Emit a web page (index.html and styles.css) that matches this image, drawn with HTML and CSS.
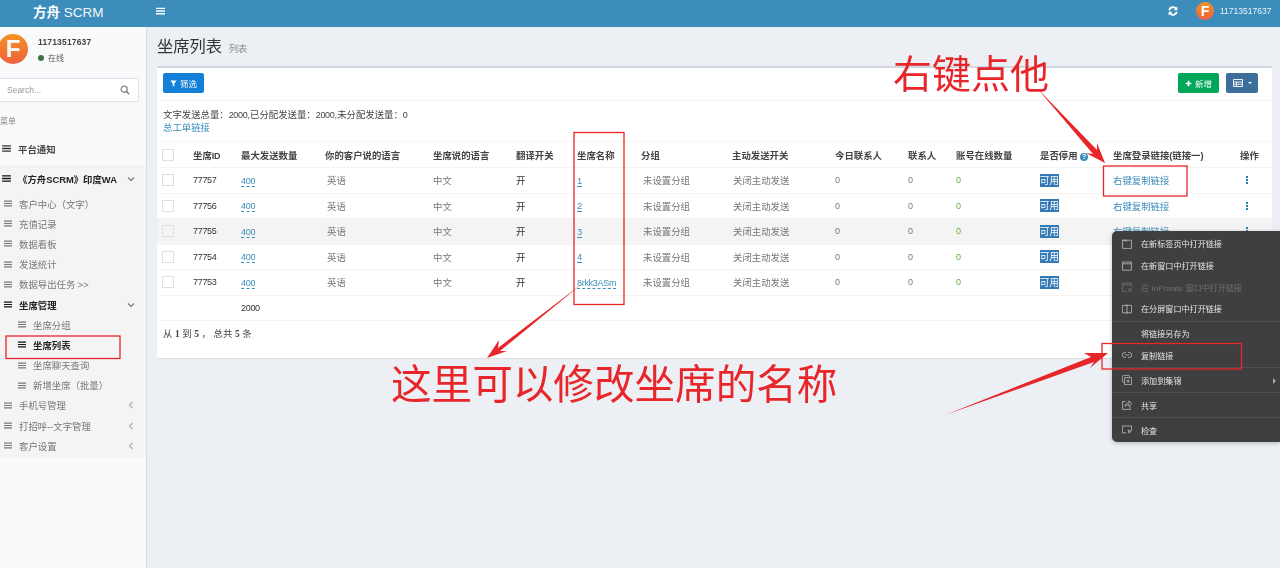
FILE: index.html
```html
<!DOCTYPE html>
<html lang="zh-CN">
<head>
<meta charset="utf-8">
<title>坐席列表</title>
<link rel="stylesheet" href="styles.css">
</head>
<body>
<svg class="defs" width="0" height="0">
  <symbol id="bars" viewBox="0 0 10 8"><path d="M0 1h10M0 4h10M0 7h10" stroke="currentColor" stroke-width="1.500" fill="none"/></symbol>
  <symbol id="down" viewBox="0 0 8 6"><path d="M1 1.500l3 3 3-3" stroke="currentColor" stroke-width="1.200" fill="none"/></symbol>
  <symbol id="left" viewBox="0 0 6 8"><path d="M4.500 1L1.500 4l3 3" stroke="currentColor" stroke-width="1.100" fill="none"/></symbol>
</svg>
<div class="page">
  <header class="topbar">
    <div class="logo"><b>方舟</b> SCRM</div>
    <svg class="toggle"><use href="#bars"/></svg>
    <div class="spacer"></div>
    <svg class="refresh" viewBox="0 0 10 10"><path d="M1.200 4.200A3.900 3.900 0 0 1 8 2.600M8.800 5.800A3.900 3.900 0 0 1 2 7.400" stroke="#fff" stroke-width="1.900" fill="none"/><path d="M9.400.4v3.800H5.600zM.6 9.600V5.800h3.800z" fill="#fff"/></svg>
    <div class="avatar avatar-sm">F</div>
    <span class="top-user">11713517637</span>
  </header>
  <div class="layout">
    <aside class="sidebar">
      <div class="user-panel">
        <div class="avatar avatar-lg">F</div>
        <div class="user-info">
          <div class="user-name">11713517637</div>
          <div class="user-status"><i class="dot"></i>在线</div>
        </div>
      </div>
      <div class="search"><span>Search...</span>
        <svg viewBox="0 0 10 10"><circle cx="4.200" cy="4.200" r="3" stroke="#888" stroke-width="1.300" fill="none"/><path d="M6.400 6.400L9.200 9.200" stroke="#888" stroke-width="1.600"/></svg>
      </div>
      <div class="menu-label">菜单</div>
      <div class="notice"><svg class="ic"><use href="#bars"/></svg>平台通知</div>
      <nav class="menu">
        <div class="item strong wa"><svg class="ic"><use href="#bars"/></svg>《方舟SCRM》印度WA<svg class="chev"><use href="#down"/></svg></div>
        <div class="item"><svg class="ic"><use href="#bars"/></svg>客户中心（文字）</div>
        <div class="item"><svg class="ic"><use href="#bars"/></svg>充值记录</div>
        <div class="item"><svg class="ic"><use href="#bars"/></svg>数据看板</div>
        <div class="item"><svg class="ic"><use href="#bars"/></svg>发送统计</div>
        <div class="item"><svg class="ic"><use href="#bars"/></svg>数据导出任务 &gt;&gt;</div>
        <div class="item strong"><svg class="ic"><use href="#bars"/></svg>坐席管理<svg class="chev"><use href="#down"/></svg></div>
        <div class="item sub"><svg class="ic"><use href="#bars"/></svg>坐席分组</div>
        <div class="item sub strong"><svg class="ic"><use href="#bars"/></svg>坐席列表</div>
        <div class="item sub"><svg class="ic"><use href="#bars"/></svg>坐席聊天查询</div>
        <div class="item sub"><svg class="ic"><use href="#bars"/></svg>新增坐席（批量）</div>
        <div class="item"><svg class="ic"><use href="#bars"/></svg>手机号管理<svg class="chev chev-l"><use href="#left"/></svg></div>
        <div class="item"><svg class="ic"><use href="#bars"/></svg>打招呼--文字管理<svg class="chev chev-l"><use href="#left"/></svg></div>
        <div class="item"><svg class="ic"><use href="#bars"/></svg>客户设置<svg class="chev chev-l"><use href="#left"/></svg></div>
      </nav>
    </aside>
    <main class="content">
      <h1 class="title">坐席列表 <small>列表</small></h1>
      <section class="box">
        <div class="toolbar">
          <button class="btn btn-filter"><svg viewBox="0 0 8 8"><path d="M.3.6h7.400L4.900 4v3.600L3.100 6.400V4z" fill="#fff"/></svg>筛选</button>
          <div class="spacer"></div>
          <button class="btn btn-add"><svg viewBox="0 0 8 8"><path d="M4 .8v6.400M.8 4h6.400" stroke="#fff" stroke-width="1.900"/></svg>新增</button>
          <button class="btn btn-cols"><svg viewBox="0 0 10 8"><path d="M.5.5h9v7h-9zM.5 3h9M.5 5.200h9M3.500 3v4.500" stroke="#fff" stroke-width=".9" fill="none"/></svg><i class="caret"></i></button>
        </div>
        <div class="summary">
          <div>文字发送总量：<span class="n">2000</span>,已分配发送量：<span class="n">2000</span>,未分配发送量：<span class="n">0</span></div>
          <a class="link">总工单链接</a>
        </div>
        <table class="grid">
          <colgroup>
            <col class="c1"><col class="c2"><col class="c3"><col class="c4"><col class="c5"><col class="c6"><col class="c7"><col class="c8"><col class="c9"><col class="c10"><col class="c11"><col class="c12"><col class="c13"><col class="c14"><col class="c15">
          </colgroup>
          <thead>
            <tr>
              <th><i class="check"></i></th><th>坐席<span class="nb">ID</span></th><th>最大发送数量</th><th>你的客户说的语言</th><th>坐席说的语言</th><th>翻译开关</th><th>坐席名称</th><th>分组</th><th>主动发送开关</th><th>今日联系人</th><th>联系人</th><th>账号在线数量</th><th>是否停用 <i class="help">?</i></th><th>坐席登录链接(链接一)</th><th class="op-head">操作</th>
            </tr>
          </thead>
          <tbody>
            <tr><td><i class="check"></i></td><td class="n">77757</td><td><a class="edit n">400</a></td><td class="soft in">英语</td><td class="soft">中文</td><td>开</td><td><a class="edit">1</a></td><td class="soft in">未设置分组</td><td class="soft in1">关闭主动发送</td><td class="soft n">0</td><td class="soft n">0</td><td class="green n">0</td><td><span class="sel">可用</span></td><td><a class="link">右键复制链接</a></td><td class="op"><i class="more"></i></td></tr>
            <tr><td><i class="check"></i></td><td class="n">77756</td><td><a class="edit n">400</a></td><td class="soft in">英语</td><td class="soft">中文</td><td>开</td><td><a class="edit">2</a></td><td class="soft in">未设置分组</td><td class="soft in1">关闭主动发送</td><td class="soft n">0</td><td class="soft n">0</td><td class="green n">0</td><td><span class="sel">可用</span></td><td><a class="link">右键复制链接</a></td><td class="op"><i class="more"></i></td></tr>
            <tr class="hover"><td><i class="check"></i></td><td class="n">77755</td><td><a class="edit n">400</a></td><td class="soft in">英语</td><td class="soft">中文</td><td>开</td><td><a class="edit">3</a></td><td class="soft in">未设置分组</td><td class="soft in1">关闭主动发送</td><td class="soft n">0</td><td class="soft n">0</td><td class="green n">0</td><td><span class="sel">可用</span></td><td><a class="link">右键复制链接</a></td><td class="op"><i class="more"></i></td></tr>
            <tr><td><i class="check"></i></td><td class="n">77754</td><td><a class="edit n">400</a></td><td class="soft in">英语</td><td class="soft">中文</td><td>开</td><td><a class="edit">4</a></td><td class="soft in">未设置分组</td><td class="soft in1">关闭主动发送</td><td class="soft n">0</td><td class="soft n">0</td><td class="green n">0</td><td><span class="sel">可用</span></td><td></td><td></td></tr>
            <tr><td><i class="check"></i></td><td class="n">77753</td><td><a class="edit n">400</a></td><td class="soft in">英语</td><td class="soft">中文</td><td>开</td><td><a class="edit n">8rkk3ASm</a></td><td class="soft in">未设置分组</td><td class="soft in1">关闭主动发送</td><td class="soft n">0</td><td class="soft n">0</td><td class="green n">0</td><td><span class="sel">可用</span></td><td></td><td></td></tr>
            <tr><td></td><td></td><td class="n">2000</td><td></td><td></td><td></td><td></td><td></td><td></td><td></td><td></td><td></td><td></td><td></td><td></td></tr>
          </tbody>
        </table>
        <div class="pager">从 <b class="nb">1</b> 到 <b class="nb">5</b> ， 总共 <b class="nb">5</b> 条</div>
      </section>
    </main>
  </div>

  <div class="ctx">
    <div class="ctx-item"><svg viewBox="0 0 10 10"><path d="M.6 1.200h8.800v8.200H.6zM.6 1.200h3.600v1.800" /></svg>在新标签页中打开链接</div>
    <div class="ctx-item"><svg viewBox="0 0 10 10"><path d="M.6 1h8.800v8.200H.6zM.6 2.800h8.800"/></svg>在新窗口中打开链接</div>
    <div class="ctx-item off"><svg viewBox="0 0 10 10"><path d="M5 9.400H.6V1h8.800v4M.6 2.800h8.800"/><circle cx="8" cy="8" r="1.500"/></svg>在 InPrivate 窗口中打开链接</div>
    <div class="ctx-item"><svg viewBox="0 0 10 10"><path d="M.4 1.400h9.200v7.400H.4zM5 .4v9.200"/></svg>在分屏窗口中打开链接</div>
    <div class="ctx-sep"></div>
    <div class="ctx-item"><span class="ctx-blank"></span>将链接另存为</div>
    <div class="ctx-item"><svg viewBox="0 0 10 10"><path d="M4 2.600H2.600a2.400 2.400 0 0 0 0 4.800H4M6 2.600h1.400a2.400 2.400 0 0 1 0 4.800H6M3 5h4"/></svg>复制链接</div>
    <div class="ctx-sep"></div>
    <div class="ctx-item"><svg viewBox="0 0 10 10"><path d="M2 7.400H1.600A1.200 1.200 0 0 1 .4 6.200V1.600A1.200 1.200 0 0 1 1.600.4h4.600A1.200 1.200 0 0 1 7.400 1.600V2M2.600 2.600h7v7h-7zM6.100 4.400v3.400M4.400 6.100h3.400"/></svg>添加到集锦<i class="ctx-arrow"></i></div>
    <div class="ctx-sep"></div>
    <div class="ctx-item"><svg viewBox="0 0 10 10"><path d="M3.600 1.600H.6v7.800h7.600V6.600M3 6.400C3.400 4 5 3 7 3V.8l2.600 3L7 6.600V4.800c-1.600 0-3 .4-4 1.600z"/></svg>共享</div>
    <div class="ctx-sep"></div>
    <div class="ctx-item"><svg viewBox="0 0 10 10"><path d="M4.400 7.800H.4V1h9.200v5M6 5l3 1.400-1.300.5-.5 1.300z"/></svg>检查</div>
  </div>

  <svg class="marks" viewBox="0 0 1280 568">
    <g class="mark-box">
      <rect x="574" y="132.500" width="50" height="172"/>
      <rect x="6" y="336" width="114" height="22.500"/>
      <rect x="1103.500" y="166" width="83.500" height="30"/>
      <rect x="1102" y="343.500" width="139.500" height="25.500"/>
    </g>
    <g class="mark-arrow">
      <polygon points="1037,88 1097,150 1097,143 1105,163 1086,153 1093,154"/>
      <polygon points="583,283 498,348 499,340 487,358 507,351 500,351"/>
      <polygon points="945,415 1091,357 1084,353 1108,353 1090,368 1094,362"/>
    </g>
  </svg>
  <div class="note note-a">右键点他</div>
  <div class="note note-b">这里可以修改坐席的名称</div>
</div>
</body>
</html>
```

FILE: styles.css
```css
* { box-sizing: border-box; }
html, body { margin: 0; height: 100%; overflow: hidden; }
body {
  font-family: "Liberation Sans", "Noto Sans CJK SC", sans-serif;
  font-size: 9.4px;
  color: #333;
  background: #ecf0f5;
}
.defs { position: absolute; }
.page { position: relative; width: 1280px; height: 568px; overflow: hidden; filter: blur(.3px); }
.spacer { flex: 1; }

/* top bar */
.topbar { display: flex; align-items: center; height: 27px; padding-bottom: 6px; background: #3c8dbc; color: #fff; }
.logo { width: 146px; padding-left: 33px; font-size: 13.500px; white-space: nowrap; color: #f0f6fa; }
.logo b { color: #fff; }
.toggle { width: 9px; height: 8px; margin-left: 10px; color: #fff; }
.refresh { width: 10px; height: 10px; margin-right: 18px; }
.avatar {
  display: flex; align-items: center; justify-content: center; border-radius: 50%;
  background: linear-gradient(#f39325, #f0603c); color: #fff; font-weight: 700;
}
.avatar-sm { width: 18px; height: 18px; font-size: 14px; margin-right: 6px; }
.top-user { font-size: 8.500px; width: 60px; color: #eaf3f8; }

/* layout */
.layout { display: flex; height: 541px; }
.sidebar { width: 147px; flex: none; background: #f9fafc; border-right: 1px solid #d9dde4; }
.user-panel { display: flex; height: 51px; padding-top: 7px; margin-left: -2px; }
.avatar-lg { width: 30px; height: 30px; font-size: 24px; flex: none; }
.user-info { margin: 3px 0 0 10px; }
.user-name { font-size: 8.500px; font-weight: 700; color: #444; letter-spacing: .02em; }
.user-status { display: flex; align-items: center; margin-top: 5px; font-size: 8px; color: #555; }
.dot { width: 6px; height: 6px; border-radius: 50%; background: #3c763d; margin-right: 4px; }
.search {
  display: flex; align-items: center; justify-content: space-between;
  width: 139px; height: 24px; padding: 0 8px 0 7px; background: #fff;
  border: 1px solid #dfe3e8; border-left: 0; color: #999; font-size: 8.500px;
}
.search svg { width: 10px; height: 10px; }
.menu-label { height: 20px; margin-top: 13px; font-size: 8px; color: #888; }
.notice { display: flex; align-items: center; height: 27px; margin-bottom: 3px; padding-left: 2px; font-weight: 700; color: #444; }
.menu { height: 292px; padding-top: 1.500px; background: #f4f4f5; }
.item { display: flex; align-items: center; height: 20.200px; padding-left: 4px; color: #777; white-space: nowrap; }
.ic { width: 8px; height: 7px; margin-right: 7px; color: #777; flex: none; }
.notice .ic { width: 9px; margin-right: 7px; color: #333; }
.strong { color: #222; font-weight: 700; }
.strong .ic { color: #111; }
.wa { height: 24px; margin-bottom: 3px; padding-left: 2px; }
.wa .ic { width: 9px; margin-right: 7px; }
.sub { padding-left: 18px; }
.chev { width: 8px; height: 6px; margin-left: auto; margin-right: 11px; color: #777; }
.chev-l { width: 6px; height: 8px; margin-right: 12px; color: #aaa; }

/* content */
.content { flex: 1; min-width: 0; padding: 0 8px 0 10px; }
.title { height: 39px; margin: 0; padding-top: 8px; font-size: 16.300px; font-weight: 400; color: #333; line-height: 22px; }
.title small { font-size: 9.400px; color: #888; margin-left: 2px; }
.box { height: 292px; background: #fff; border-top: 2px solid #d2d6de; border-radius: 2px; box-shadow: 0 1px 1px rgba(0,0,0,.08); }
.toolbar { display: flex; align-items: flex-start; height: 33px; padding: 5px 14px 0 6px; border-bottom: 1px solid #f4f4f4; }
.btn { display: flex; align-items: center; justify-content: center; height: 20px; padding: 0; border: 0; border-radius: 2px; color: #fff; font: inherit; font-size: 8.500px; }
.btn svg { width: 7px; height: 7px; margin-right: 3px; }
.btn-filter { width: 41px; background: #127fd8; }
.btn-add { width: 41px; background: #00a65a; }
.btn-cols { width: 32px; margin-left: 7px; background: #3d6f9d; }
.btn-cols svg { width: 10px; height: 8px; }
.caret { width: 0; height: 0; margin-left: 2px; border: 2.500px solid transparent; border-top-color: #fff; border-bottom: 0; }
.summary { height: 41px; padding: 8px 6px 0; line-height: 12.500px; color: #444; border-bottom: 1px solid #f6f6f6; }
.link { color: #3c8dbc; }
.n, .nb { font-size: 9px; letter-spacing: -.3px; }
.grid { table-layout: fixed; width: 1115px; border-collapse: collapse; }
.c1 { width: 30px; } .c2 { width: 48px; } .c3 { width: 84px; } .c4 { width: 108px; } .c5 { width: 83px; }
.c6 { width: 61px; } .c7 { width: 64px; } .c8 { width: 91px; } .c9 { width: 103px; } .c10 { width: 73px; }
.c11 { width: 48px; } .c12 { width: 84px; } .c13 { width: 73px; } .c14 { width: 127px; } .c15 { width: 38px; }
.grid th, .grid td { height: 25.500px; padding: 0 0 0 6px; text-align: left; vertical-align: middle; white-space: nowrap; border-bottom: 1px solid #f4f4f4; }
.grid th { color: #444; font-weight: 700; }
.grid th:first-child, .grid td:first-child { padding-left: 5px; }
.hover td { background: #f4f4f4; }
.check { display: block; width: 12px; height: 12px; background: #fff; border: 1px solid #e0e0e0; }
.hover .check { background: #f4f4f4; }
.soft { color: #777; }
.in { padding-left: 8px !important; }
.in1 { padding-left: 7px !important; }
.green { color: #5cb03c; }
.edit { color: #3c8dbc; border-bottom: 1px dashed #3c8dbc; }
.sel { display: inline-block; line-height: 13px; background: #337ab7; color: #fff; }
.help { display: inline-block; width: 8px; height: 8px; border-radius: 50%; background: #3c8dbc; color: #fff; font: 700 7px/8px "Liberation Sans", sans-serif; text-align: center; vertical-align: 0; }
.op { padding-left: 12px !important; }
.op-head { padding-left: 6px !important; }
.more { display: block; width: 2px; height: 8px; background: radial-gradient(circle at 1px 1px, #2f7fae 1px, transparent 1px) 0 0 / 2px 3px; }
.pager { padding: 5px 6px; color: #444; }
.pager b { font-family: "Liberation Serif", serif; font-size: 9.400px; letter-spacing: 0; }

/* context menu */
.ctx { position: absolute; left: 1112px; top: 231px; width: 168px; height: 211px; padding-top: 2.200px; background: #3f3f3f; border-radius: 5px 0 0 5px; color: #e4e4e4; font-size: 8.100px; box-shadow: 0 1px 4px rgba(0,0,0,.25); }
.ctx-item { position: relative; display: flex; align-items: center; height: 21.600px; padding-left: 10px; white-space: nowrap; }
.ctx-item svg { width: 10px; height: 10px; margin-right: 9px; fill: none; stroke: #cfcfcf; stroke-width: .7; flex: none; }
.ctx-blank { width: 19px; }
.off { color: #6f6f6f; }
.off svg { stroke: #777; }
.ctx-sep { height: 2.400px; margin-top: 1px; border-top: 1px solid #505050; }
.ctx-arrow { position: absolute; right: 4px; top: 8px; border: 3px solid transparent; border-left-color: #aaa; border-right: 0; }

/* annotations */
.marks { position: absolute; left: 0; top: 0; width: 1280px; height: 568px; pointer-events: none; }
.mark-box rect { fill: none; stroke: #e8262a; stroke-width: 1.300; }
.mark-arrow polygon { fill: #e8262a; }
.note { position: absolute; color: #e8262a; line-height: 1; white-space: nowrap; font-family: "Noto Sans CJK SC", sans-serif; font-weight: 400; }
.note-a { left: 893px; top: 52px; font-size: 39px; }
.note-b { left: 391px; top: 362px; font-size: 40.600px; }
```
